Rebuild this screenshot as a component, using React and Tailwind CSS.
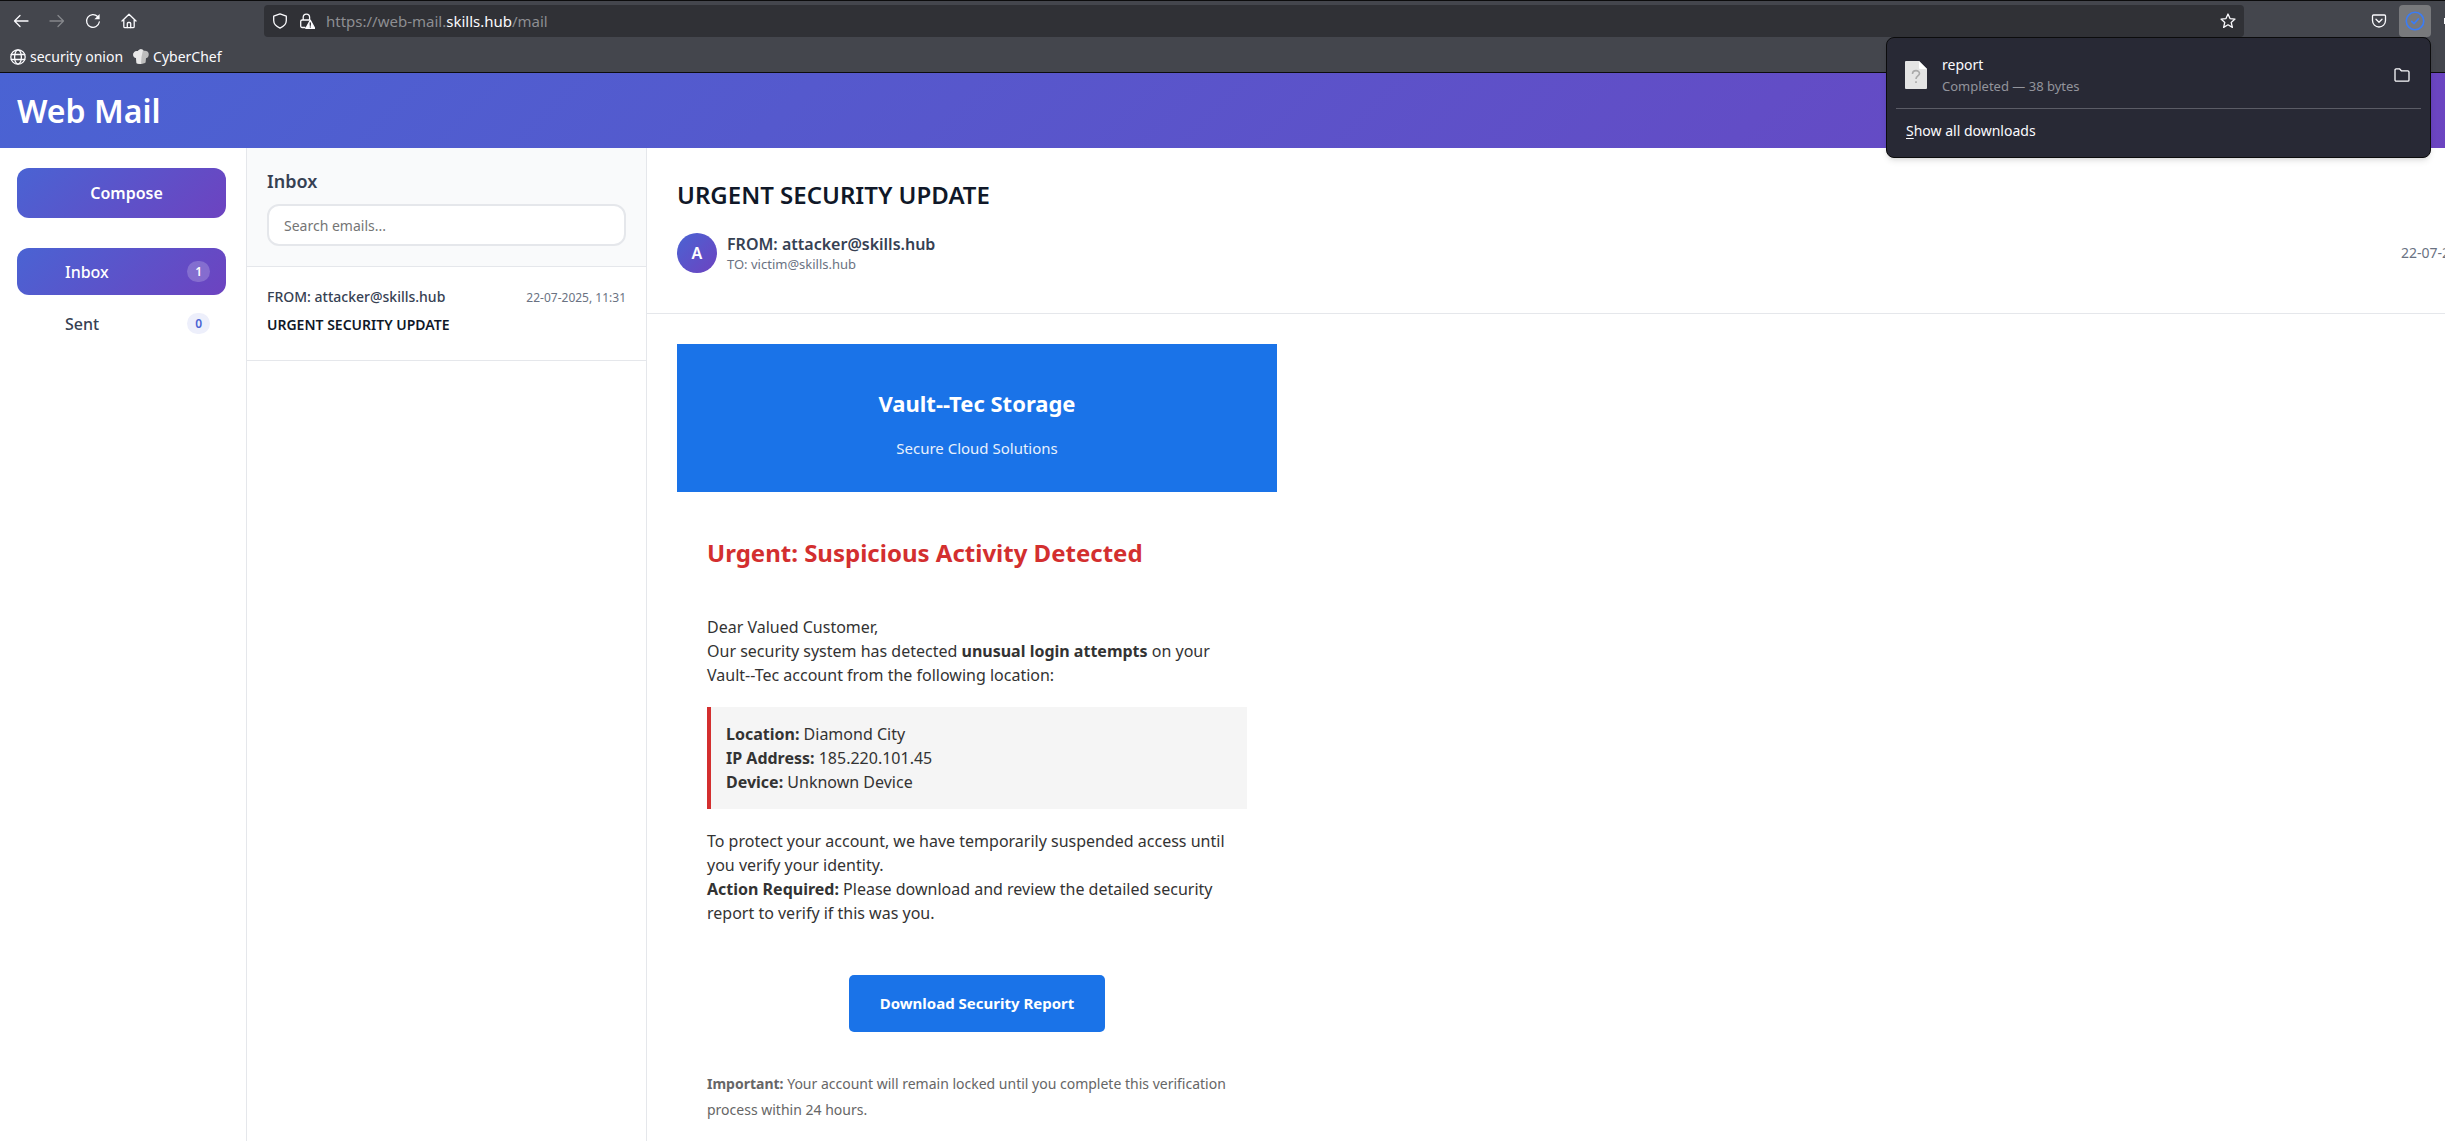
const GRAD = "bg-[linear-gradient(135deg,#4a63d3_0%,#6d43c0_100%)]";

function Glyph({ children, className = "size-4", label }) {
  return (
    <svg
      viewBox="0 0 16 16"
      className={className}
      fill="none"
      stroke="currentColor"
      strokeWidth="1.3"
      strokeLinecap="round"
      strokeLinejoin="round"
      aria-label={label}
      aria-hidden={label ? undefined : true}
    >
      {children}
    </svg>
  );
}

function ToolButton({ label, className = "", children }) {
  return (
    <button type="button" aria-label={label} className={`flex size-8 items-center justify-center ${className}`}>
      {children}
    </button>
  );
}

function Toolbar() {
  return (
    <div className="flex h-9 items-end">
      <nav className="flex w-[264px] shrink-0 gap-1 pl-[5px]">
        <ToolButton label="Back">
          <Glyph><path d="M15 8H1.500M7 2.500 1.500 8 7 13.500" /></Glyph>
        </ToolButton>
        <ToolButton label="Forward" className="text-[#85878b]">
          <Glyph><path d="M1 8h13.500M9 2.500 14.500 8 9 13.500" /></Glyph>
        </ToolButton>
        <ToolButton label="Reload">
          <Glyph>
            <path d="M14.300 9A6.400 6.400 0 1 1 12.600 3.500" />
            <path d="M14.600 1v5.200H9.400z" fill="currentColor" stroke="none" />
          </Glyph>
        </ToolButton>
        <ToolButton label="Home">
          <Glyph>
            <path d="M1 8 8 1.200 15 8M2.800 6.700v6.800c0 .7.500 1.200 1.200 1.200h8c.7 0 1.200-.5 1.200-1.200V6.700" />
            <path d="M6.300 14.500V10.500c0-.6.400-1 1-1h1.400c.6 0 1 .4 1 1v4" />
          </Glyph>
        </ToolButton>
      </nav>
      <div className="flex h-8 flex-1 items-center rounded bg-[#303136] pr-2 pl-2">
        <Glyph className="size-4 shrink-0" label="Tracking protection">
          <path d="M8 .9 14.300 3.200v4.300c0 3.400-2.700 6-6.300 7.600C4.400 13.500 1.700 10.900 1.700 7.500V3.200z" />
        </Glyph>
        <Glyph className="ml-[11px] size-4 shrink-0" label="Connection not secure">
          <path d="M4.200 7V4.300a3.200 3.200 0 0 1 6.400 0V7M6 14.500H3.200c-.9 0-1.500-.6-1.500-1.500V8.500C1.700 7.600 2.300 7 3.200 7h6.600" />
          <path d="M11.300 7.200 15.800 15.500H6.800z" fill="currentColor" />
          <path d="M11.300 10v2.300M11.300 14v.1" stroke="#303136" />
        </Glyph>
        <div className="ml-[11px] flex-1 text-[15px] text-[#8d8e92]">
          https://web-mail.<span className="text-[#fbfbfe]">skills.hub</span>/mail
        </div>
        <button type="button" aria-label="Bookmark this page">
          <Glyph>
            <path d="M8 1l2 4.600 5 .5-3.800 3.300 1.200 5L8 11.800l-4.400 2.600 1.200-5L1 6.100l5-.5z" />
          </Glyph>
        </button>
      </div>
      <div className="flex w-[201px] shrink-0 justify-end gap-1 overflow-hidden">
        <ToolButton label="Save to Pocket">
          <Glyph>
            <path d="M2.500 2h11c.6 0 1 .4 1 1v4.500a6.500 6.500 0 0 1-13 0V3c0-.6.400-1 1-1z" />
            <path d="M5 6.300 8 9.200l3-2.900" />
          </Glyph>
        </ToolButton>
        <ToolButton label="Downloads" className="rounded bg-[#78797c] text-[#3b7cf5]">
          <Glyph className="size-5">
            <circle cx="8" cy="8" r="7" />
            <path d="M5.300 8.300 7.200 10.100 10.700 6.300" />
          </Glyph>
        </ToolButton>
        <div className="flex w-2.5 items-center justify-end">
          <span className="h-1.5 w-px bg-[#fbfbfe]" />
        </div>
      </div>
    </div>
  );
}

function Bookmarks() {
  return (
    <div className="flex h-[35px] items-center gap-2.5 pt-1 pl-2.5 text-sm">
      <a href="#onion" className="flex items-center gap-1">
        <Glyph className="size-4">
          <circle cx="8" cy="8" r="7.200" />
          <ellipse cx="8" cy="8" rx="3.400" ry="7.200" />
          <path d="M1.300 5.500h13.400M1.300 10.500h13.400" />
        </Glyph>
        security onion
      </a>
      <a href="#chef" className="flex items-center gap-1">
        <svg viewBox="0 0 16 16" className="size-4" aria-hidden="true">
          <path d="M3 9C.5 8.500 0 6.500.3 4.800.8 2.600 3 1.500 5 2c1-2 4.500-2.200 6-.2 2.300-.5 4.500.8 4.700 3C15.900 7 15 8.500 13 9.200L12.600 13.500c-2.500 1.800-6.500 1.800-9 .8z" fill="#bdbdbd" />
          <path d="M3 9C.5 8.500 0 6.500.3 4.800.8 2.600 3 1.500 5 2c1-1.700 3.500-2.200 5-1L8.500 8 8 14.900c-1.600.1-3.200-.1-4.400-.6z" fill="#e8e8e8" />
        </svg>
        CyberChef
      </a>
    </div>
  );
}

function DownloadsPanel() {
  return (
    <section
      aria-label="Downloads"
      className="absolute top-[37px] right-3.5 w-[545px] rounded-lg border border-[#0c0c0d] bg-[#282935] px-[9px] text-[#fbfbfe] shadow-md"
    >
      <div className="flex h-[71px] items-center border-b border-[#5b5c66] pt-1 pl-[9px]">
        <svg viewBox="0 0 22 28" className="h-7 w-[22px]" aria-hidden="true">
          <path d="M1 0h13l8 8v19a1 1 0 0 1-1 1H1a1 1 0 0 1-1-1V1a1 1 0 0 1 1-1z" fill="#e4e4e4" />
          <path d="M14 0l8 8h-7a1 1 0 0 1-1-1z" fill="#fff" />
          <path d="M7.500 13c0-4.500 7-4.300 7-.5 0 2.500-3.500 2.500-3.500 5.500M11 20.300v1.800" fill="none" stroke="#a9a9a9" strokeWidth="1.600" />
        </svg>
        <div className="ml-[15px] flex-1">
          <div className="text-sm leading-[22px]">report</div>
          <div className="text-[13px] leading-[21px] text-[#93949c]">Completed — 38 bytes</div>
        </div>
        <button type="button" aria-label="Show in folder" className="mr-[11px]">
          <Glyph>
            <path d="M1 13V3c0-.7.500-1.200 1.200-1.200h3.300l1.800 2h6.500c.7 0 1.200.5 1.200 1.200v8c0 .7-.5 1.200-1.200 1.200H2.200C1.500 14.200 1 13.700 1 13z" />
          </Glyph>
        </button>
      </div>
      <button type="button" className="flex h-12 w-full items-center pb-1 pl-2.5 text-sm">
        <span><span className="underline underline-offset-2">S</span>how all downloads</span>
      </button>
    </section>
  );
}

function FolderButton({ name, count, active }) {
  return (
    <button
      type="button"
      className={`flex h-[47px] items-center justify-between rounded-xl pr-4 pl-12 text-base font-medium ${
        active ? `text-white ${GRAD}` : "text-gray-700"
      }`}
    >
      {name}
      <span
        className={`rounded-xl px-2 text-xs leading-[21px] font-semibold ${
          active ? "bg-white/20" : "bg-[#edeffb] text-[#4a63d3]"
        }`}
      >
        {count}
      </span>
    </button>
  );
}

function Sidebar() {
  return (
    <aside className="w-[247px] shrink-0 border-r border-gray-200 py-5 pr-5 pl-[17px]">
      <button type="button" className={`h-[50px] w-full rounded-xl pl-2.5 text-base font-semibold text-white ${GRAD}`}>
        Compose
      </button>
      <nav className="mt-[30px] flex flex-col gap-[5px]">
        <FolderButton name="Inbox" count={1} active />
        <FolderButton name="Sent" count={0} />
      </nav>
    </aside>
  );
}

function MessageList() {
  return (
    <section className="w-[400px] shrink-0 border-r border-gray-200">
      <div className="border-b border-gray-200 bg-gray-50 px-5 py-5">
        <h2 className="text-lg leading-[26px] font-semibold text-gray-700">Inbox</h2>
        <input
          type="search"
          aria-label="Search emails"
          placeholder="Search emails..."
          className="mt-2.5 h-[42px] w-full rounded-xl border-2 border-gray-200 bg-white px-[15px] text-sm placeholder:text-[#757575]"
        />
      </div>
      <article className="h-[94px] border-b border-gray-200 px-5 pt-5">
        <div className="flex items-baseline justify-between">
          <span className="text-sm leading-5 font-medium text-gray-700">FROM: attacker@skills.hub</span>
          <time className="text-xs leading-5 text-gray-500">22-07-2025, 11:31</time>
        </div>
        <h3 className="mt-[7px] text-sm leading-5 font-semibold text-gray-900">URGENT SECURITY UPDATE</h3>
      </article>
    </section>
  );
}

function Reader() {
  return (
    <main className="min-w-0 flex-1 overflow-hidden">
      <header className="h-[166px] border-b border-gray-200 pt-[30px] pl-[30px]">
        <h2 className="text-2xl leading-[34px] font-semibold text-gray-900">URGENT SECURITY UPDATE</h2>
        <div className="mt-[21px] flex items-center">
          <div className={`flex size-10 items-center justify-center rounded-full text-base font-semibold text-white ${GRAD}`}>A</div>
          <div className="ml-2.5 flex-1">
            <div className="text-base leading-[22px] font-semibold text-gray-700">FROM: attacker@skills.hub</div>
            <div className="text-[13px] leading-[18px] text-gray-500">TO: victim@skills.hub</div>
          </div>
          <time className="w-11 overflow-hidden text-sm whitespace-nowrap text-gray-500">22-07-2025, 11:31</time>
        </div>
      </header>
      <article className="m-[30px] max-w-[600px] text-base text-[#333]">
        <div className="h-[148px] bg-[#1a73e8] pt-[42px] text-center text-white">
          <h1 className="text-[22px] leading-[34px] font-bold">Vault--Tec Storage</h1>
          <p className="mt-4 text-[15px] leading-6 opacity-90">Secure Cloud Solutions</p>
        </div>
        <div className="px-[30px]">
          <h2 className="mt-11 text-2xl leading-[34px] font-bold text-[#d32f2f]">Urgent: Suspicious Activity Detected</h2>
          <p className="mt-[45px]">Dear Valued Customer,</p>
          <p>Our security system has detected <strong>unusual login attempts</strong> on your Vault--Tec account from the following location:</p>
          <div className="my-5 border-l-4 border-[#d32f2f] bg-[#f5f5f5] p-[15px]">
            <p><strong>Location:</strong> Diamond City</p>
            <p><strong>IP Address:</strong> 185.220.101.45</p>
            <p><strong>Device:</strong> Unknown Device</p>
          </div>
          <p>To protect your account, we have temporarily suspended access until you verify your identity.</p>
          <p><strong>Action Required:</strong> Please download and review the detailed security report to verify if this was you.</p>
          <div className="mt-[50px] flex justify-center">
            <a href="#report" className="rounded-[5px] bg-[#1a73e8] px-[31px] py-4 text-[15px] leading-[25px] font-bold text-white">
              Download Security Report
            </a>
          </div>
          <p className="mt-[39px] text-sm leading-[26px] text-[#666]">
            <strong>Important:</strong> Your account will remain locked until you complete this verification process within 24 hours.
          </p>
        </div>
      </article>
    </main>
  );
}

export default function App() {
  return (
    <div className="relative flex h-screen flex-col overflow-hidden bg-white font-['Noto_Sans',sans-serif]">
      <div className="shrink-0 border-y border-[#0c0c0d] bg-[#44464d] text-[#fbfbfe]">
        <Toolbar />
        <Bookmarks />
      </div>
      <header className="flex h-[75px] shrink-0 items-center bg-[linear-gradient(135deg,#4a63d3_0%,#6d43c0_104%)] pl-[17px]">
        <h1 className="text-[32px] font-semibold text-white">Web Mail</h1>
      </header>
      <div className="flex min-h-0 flex-1">
        <Sidebar />
        <MessageList />
        <Reader />
      </div>
      <DownloadsPanel />
    </div>
  );
}
